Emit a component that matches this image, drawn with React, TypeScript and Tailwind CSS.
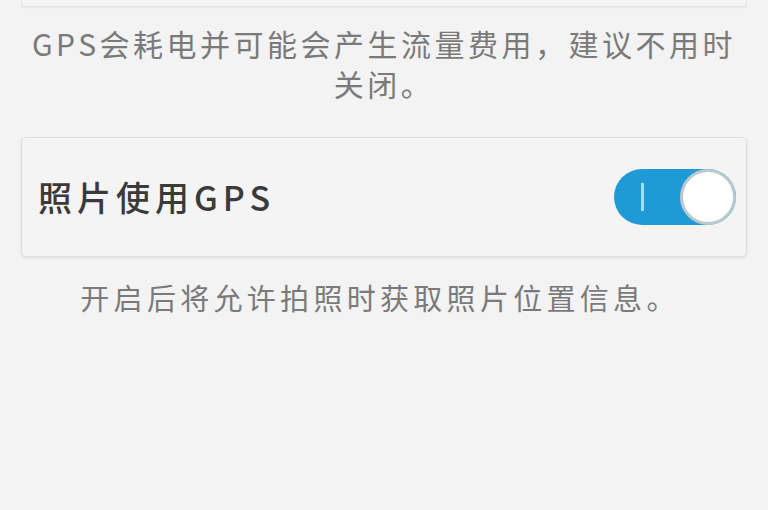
export default function App() {
    return (
        <div
            className="w-full h-[510px] overflow-hidden bg-[#f3f3f3]"
            style={{ fontFamily: '"Noto Sans CJK SC", "Noto Sans", sans-serif' }}
        >
            {/* bottom edge of the card above */}
            <div className="mx-[21px] h-[7px] rounded-b-[4px] border-x border-b border-[#e2e2e2] bg-[#f5f5f5] shadow-[0_1px_2px_rgba(0,0,0,0.06)]" />

            <p className="mt-[16px] px-[20px] text-center text-[30px] leading-[40px] tracking-[3.5px] text-[#7a7a7a]">
                GPS会耗电并可能会产生流量费用，建议不用时
                <br />
                关闭。
            </p>

            <div className="mx-[21px] mt-[34px] h-[120px] rounded-[5px] border border-[#dedede] bg-[#f4f4f4] shadow-[0_1px_3px_rgba(0,0,0,0.09)] flex items-center justify-between pl-[16px] pr-[10px]">
                <span className="text-[34px] leading-none tracking-[5px] font-medium text-[#3a3a3a]">照片使用GPS</span>
                <div className="relative w-[122px] h-[56px] rounded-full bg-[#1f9ad6]">
                    <div className="absolute left-[27px] top-[14px] w-[3px] h-[28px] bg-[#9fe0f5]" />
                    <div className="absolute right-0 top-0 w-[56px] h-[56px] rounded-full bg-white border-[3px] border-[#b9c9cf]" />
                </div>
            </div>

            <p className="mt-[20px] text-center text-[29px] leading-[40px] tracking-[4.3px] text-[#7a7a7a] pr-[8px]">
                开启后将允许拍照时获取照片位置信息。
            </p>
        </div>
    )
}
